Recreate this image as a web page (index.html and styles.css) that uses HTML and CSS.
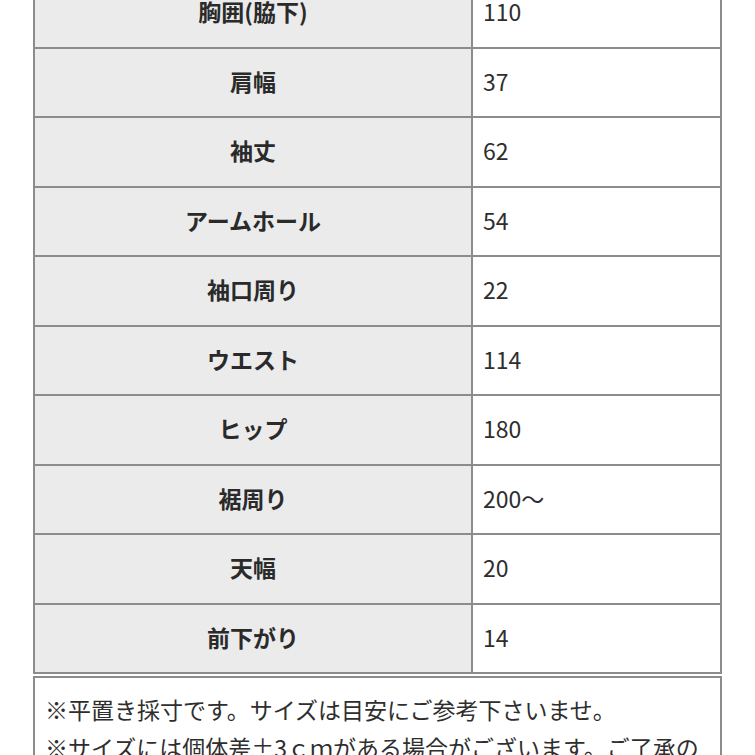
FILE: index.html
```html
<!DOCTYPE html>
<html lang="ja">
<head>
<meta charset="utf-8">
<link rel="stylesheet" href="styles.css">
</head>
<body>
<div class="page">
  <table class="size-table">
    <tbody>
      <tr><th>胸囲(脇下)</th><td>110</td></tr>
      <tr><th>肩幅</th><td>37</td></tr>
      <tr><th>袖丈</th><td>62</td></tr>
      <tr><th>アームホール</th><td>54</td></tr>
      <tr><th>袖口周り</th><td>22</td></tr>
      <tr><th>ウエスト</th><td>114</td></tr>
      <tr><th>ヒップ</th><td>180</td></tr>
      <tr><th>裾周り</th><td>200～</td></tr>
      <tr><th>天幅</th><td>20</td></tr>
      <tr><th>前下がり</th><td>14</td></tr>
    </tbody>
  </table>
  <div class="notes">
    <p>※平置き採寸です。サイズは目安にご参考下さいませ。</p>
    <p>※サイズには個体差±3ｃｍがある場合がございます。ご了承の上ご購入下さいませ。</p>
  </div>
</div>
</body>
</html>
```
FILE: styles.css
```css
html, body {
  margin: 0;
  padding: 0;
  background: #ffffff;
}
body {
  font-family: "Noto Sans CJK JP", "Noto Sans", sans-serif;
  color: #2e2e2e;
  overflow: hidden;
}
.page {
  margin: -23px 0 0 33px;
  width: 689px;
}
.size-table {
  width: 689px;
  border-collapse: collapse;
  table-layout: fixed;
}
.size-table th,
.size-table td {
  border: 2px solid #8c8c8c;
  height: 69.5px;
  box-sizing: border-box;
  padding: 0 10px 3px;
  font-size: 23px;
  line-height: 30px;
  vertical-align: middle;
}
.size-table th {
  width: 438px;
  background: #ebebeb;
  font-weight: 700;
  text-align: center;
  color: #2a2a2a;
}
.size-table td {
  background: #ffffff;
  font-weight: 400;
  text-align: left;
}
.notes {
  margin-top: 2px;
  border: 2px solid #8c8c8c;
  padding: 12px 10px 10px;
  font-size: 23px;
  line-height: 38px;
}
.notes p {
  margin: 0;
}
```
